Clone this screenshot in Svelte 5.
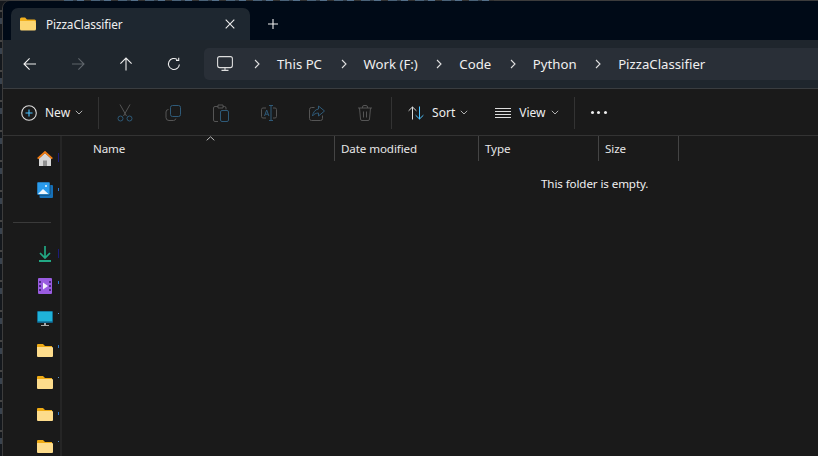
<script lang="ts">
	// Explorer window over a dark desktop, showing an empty folder.
	const crumbs = ['This PC', 'Work (F:)', 'Code', 'Python', 'PizzaClassifier'];
	const columns = [
		{ label: 'Name', cls: 'col-name' },
		{ label: 'Date modified', cls: 'col-date' },
		{ label: 'Type', cls: 'col-type' },
		{ label: 'Size', cls: 'col-size' }
	];
	// sidebar labels are cut off by the pane edge, only a sliver of each shows
	const sidebar = [
		{ icon: 'home', sliver: 'dim tall' },
		{ icon: 'gallery', sliver: 'short low' },
		{ icon: 'sep', sliver: '' },
		{ icon: 'download', sliver: 'dim tall' },
		{ icon: 'video', sliver: 'short' },
		{ icon: 'pc', sliver: 'dot' },
		{ icon: 'folder', sliver: 'short' },
		{ icon: 'folder', sliver: 'dot' },
		{ icon: 'folder', sliver: 'short low' },
		{ icon: 'folder', sliver: 'dot' }
	];
</script>

<div class="desk">
	<div class="window">
		<div class="titlebar">
			<div class="tab">
				<svg class="tab-folder" width="16" height="14" viewBox="0 0 16 14">
					<path d="M0 2a1.500 1.500 0 0 1 1.500-1.500h3.600L7 2.500h7.500A1.500 1.500 0 0 1 16 4v1H0z" fill="#f2b01e" />
					<path d="M0 4h14.500A1.500 1.500 0 0 1 16 5.500v6.500a1.500 1.500 0 0 1-1.500 1.500h-13A1.500 1.500 0 0 1 0 12z" fill="#fcd672" />
				</svg>
				<span class="tab-title">PizzaClassifier</span>
				<svg class="tab-close" width="10" height="10" viewBox="0 0 10 10">
					<path d="M.7.7l8.600 8.600M9.300.7L.7 9.300" stroke="#eee" stroke-width="1.100" fill="none" />
				</svg>
			</div>
			<svg class="tab-add" width="10" height="10" viewBox="0 0 10 10">
				<path d="M5 0v10M0 5h10" stroke="#eee" stroke-width="1.100" fill="none" />
			</svg>
		</div>

		<div class="navbar">
			<div class="nav-buttons">
				<svg width="14" height="14" viewBox="0 0 14 14"><path d="M13 7H1.200M6.600 1.400L1 7l5.600 5.600" stroke="#eee" stroke-width="1.100" fill="none" /></svg>
				<svg width="14" height="14" viewBox="0 0 14 14"><path d="M1 7h11.800M7.400 1.400L13 7l-5.600 5.600" stroke="#5f656b" stroke-width="1.100" fill="none" /></svg>
				<svg width="14" height="14" viewBox="0 0 14 14"><path d="M7 13.500V1.200M1.400 6.600L7 1l5.600 5.600" stroke="#eee" stroke-width="1.100" fill="none" /></svg>
				<svg width="14" height="14" viewBox="0 0 14 14"><path d="M12.400 7.500A5.500 5.500 0 1 1 10.300 2.600M11.700.8v2.700H9" stroke="#eee" stroke-width="1.100" fill="none" /></svg>
			</div>
			<div class="address">
				<svg class="pc-icon" width="16" height="16" viewBox="0 0 16 16">
					<rect x=".6" y=".6" width="14.800" height="11" rx="2" stroke="#ddd" stroke-width="1.100" fill="none" />
					<path d="M8 11.600v2.800M4.500 14.400h7" stroke="#ddd" stroke-width="1.100" fill="none" />
				</svg>
				{#each crumbs as crumb}
					<svg class="crumb-sep" width="6" height="10" viewBox="0 0 6 10"><path d="M1 1l4 4-4 4" stroke="#ddd" stroke-width="1.100" fill="none" /></svg>
					<span class="crumb">{crumb}</span>
				{/each}
			</div>
		</div>

		<div class="toolbar">
			<button class="tool new" type="button">
				<svg width="16" height="16" viewBox="0 0 16 16">
					<circle cx="8" cy="8" r="7.300" stroke="#ddd" stroke-width="1.100" fill="none" />
					<path d="M8 4.500v7M4.500 8h7" stroke="#4cc2ff" stroke-width="1.100" fill="none" />
				</svg>
				<span>New</span>
				<svg class="caret" width="8" height="5" viewBox="0 0 8 5"><path d="M.8.8L4 4l3.200-3.200" stroke="#b0b0b0" fill="none" /></svg>
			</button>
			<div class="vsep first"></div>
			<div class="disabled-tools">
				<span class="slot">
					<svg width="16" height="18" viewBox="0 0 16 18">
						<path d="M3 .5l6.500 11.500M13 .5L6.500 12" stroke="#555" fill="none" />
						<circle cx="3.500" cy="14.500" r="2.500" stroke="#2f5a78" fill="none" />
						<circle cx="12.500" cy="14.500" r="2.500" stroke="#2f5a78" fill="none" />
					</svg>
				</span>
				<span class="slot">
					<svg width="16" height="16" viewBox="0 0 16 16">
						<rect x="5.500" y=".5" width="10" height="11" rx="2" stroke="#2f5a78" fill="none" />
						<path d="M3.500 4.500A2.500 2.500 0 0 0 1 7v5.500a3 3 0 0 0 3 3h4.500a2.500 2.500 0 0 0 2.400-2" stroke="#555" fill="none" />
					</svg>
				</span>
				<span class="slot">
					<svg width="16" height="18" viewBox="0 0 16 18">
						<path d="M5 2.500H2a1.500 1.500 0 0 0-1.500 1.500v12A1.500 1.500 0 0 0 2 17.500h3M5 1h5v3H5zM10 2.500h1.500A1.500 1.500 0 0 1 13 4v1.500" stroke="#555" fill="none" />
						<rect x="7.500" y="6.500" width="8" height="11" rx="1.500" stroke="#2f5a78" fill="none" />
					</svg>
				</span>
				<span class="slot">
					<svg width="16" height="16" viewBox="0 0 16 16">
						<path d="M5 3H2a1.500 1.500 0 0 0-1.500 1.500v7A1.500 1.500 0 0 0 2 13h3M12 3h2a1.500 1.500 0 0 1 1.500 1.500v7A1.500 1.500 0 0 1 14 13h-2" stroke="#555" fill="none" />
						<path d="M8 .5h4M8 15.500h4M10 .5v15M3.500 11L5.700 5l2.200 6M4.300 9.200h2.800" stroke="#2f5a78" fill="none" />
					</svg>
				</span>
				<span class="slot">
					<svg width="16" height="16" viewBox="0 0 16 16">
						<path d="M5.500 2.500H2.500A2 2 0 0 0 .5 4.500v9a2 2 0 0 0 2 2h9a2 2 0 0 0 2-2v-3" stroke="#555" fill="none" />
						<path d="M9.500 1l6 5-6 5V8C7 8 5 9 3.500 11 4 7.500 6 4.500 9.500 4z" stroke="#2f5a78" fill="none" />
					</svg>
				</span>
				<span class="slot">
					<svg width="14" height="16" viewBox="0 0 14 16">
						<path d="M0 3h14M4.500 3V2A1.500 1.500 0 0 1 6 .5h2A1.500 1.500 0 0 1 9.500 2v1M1.500 3l1 11a1.500 1.500 0 0 0 1.500 1.500h6a1.500 1.500 0 0 0 1.500-1.500l1-11M5.500 6.500v6M8.500 6.500v6" stroke="#555" fill="none" />
					</svg>
				</span>
			</div>
			<div class="vsep"></div>
			<button class="tool sort" type="button">
				<svg width="16" height="14" viewBox="0 0 16 14">
					<path d="M4.500 13.500V1M.6 4.800L4.500 1l3.900 3.800" stroke="#ddd" fill="none" />
					<path d="M11.500.5V13M7.600 9.200l3.900 3.800 3.900-3.800" stroke="#4cc2ff" fill="none" />
				</svg>
				<span>Sort</span>
				<svg class="caret" width="8" height="5" viewBox="0 0 8 5"><path d="M.8.8L4 4l3.200-3.200" stroke="#b0b0b0" fill="none" /></svg>
			</button>
			<button class="tool view" type="button">
				<svg width="16" height="10" viewBox="0 0 16 10">
					<path d="M0 .5h16M0 3.500h16M0 6.500h16M0 9.500h16" stroke="#ddd" fill="none" />
				</svg>
				<span>View</span>
				<svg class="caret" width="8" height="5" viewBox="0 0 8 5"><path d="M.8.8L4 4l3.200-3.200" stroke="#b0b0b0" fill="none" /></svg>
			</button>
			<div class="vsep"></div>
			<div class="more"><i></i><i></i><i></i></div>
		</div>

		<div class="body">
			<nav class="sidebar">
				{#each sidebar as row}
					{#if row.icon === 'sep'}
						<div class="side-sep"></div>
					{:else}
						<div class="side-row">
							<span class="side-icon">
								{#if row.icon === 'home'}
									<svg width="16" height="15" viewBox="0 0 16 15">
										<path d="M2 7.500L8 2l6 5.500V15H2z" fill="#d6d6d6" />
										<rect x="6" y="9.500" width="4" height="5.500" fill="#8f8f8f" />
										<path d="M.7 7.700L8 1l7.300 6.700" stroke="#ef7a12" stroke-width="1.800" fill="none" />
									</svg>
								{:else if row.icon === 'gallery'}
									<svg width="16" height="16" viewBox="0 0 16 16">
										<rect x="2.500" y="3" width="13.500" height="13" rx="1" fill="#1570b8" />
										<rect width="13" height="13" rx="1" fill="#2a9bec" stroke="#1a1a1a" stroke-width=".5" />
										<path d="M1 12l5-5 5.500 5z" fill="#eef7fd" />
										<circle cx="9" cy="4" r="1" fill="#eef7fd" />
									</svg>
								{:else if row.icon === 'download'}
									<svg width="14" height="16" viewBox="0 0 14 16">
										<path d="M7 0v11M2 7l5 5 5-5" stroke="#22a884" stroke-width="1.700" fill="none" />
										<path d="M1 15h12" stroke="#22a884" stroke-width="2" />
									</svg>
								{:else if row.icon === 'video'}
									<svg width="14" height="16" viewBox="0 0 14 16">
										<rect width="14" height="16" rx="1" fill="#9a5ce0" />
										<path d="M5 4.500v7l5-3.500z" fill="#f4f0fb" />
										<path d="M1 3h2v2H1zM1 7h2v2H1zM1 11h2v2H1zM11 3h2v2h-2zM11 7h2v2h-2zM11 11h2v2h-2z" fill="#4a2a80" />
									</svg>
								{:else if row.icon === 'pc'}
									<svg width="16" height="15" viewBox="0 0 16 15">
										<rect width="16" height="12" rx="1" fill="#0f5f85" />
										<rect x=".8" y=".6" width="14.400" height="9.800" fill="#1fb2d8" />
										<path d="M7 12h2v2H7z" fill="#a8a8a8" />
										<path d="M4 14h8v1H4z" fill="#a8a8a8" />
									</svg>
								{:else}
									<svg width="16" height="13" viewBox="0 0 16 13">
										<path d="M0 1a1 1 0 0 1 1-1h5l2 2h7v3H0z" fill="#eeaa14" />
										<path d="M0 3h15a1 1 0 0 1 1 1v8a1 1 0 0 1-1 1H1a1 1 0 0 1-1-1z" fill="#fddc8c" />
									</svg>
								{/if}
							</span>
							<i class="sliver {row.sliver}"></i>
						</div>
					{/if}
				{/each}
			</nav>
			<div class="pane-line"></div>
			<main class="list">
				<div class="columns">
					<svg class="sort-mark" width="9" height="5" viewBox="0 0 9 5"><path d="M.7 4.300L4.500.8l3.800 3.500" stroke="#bbb" fill="none" /></svg>
					{#each columns as col}
						<div class="col {col.cls}">{col.label}</div>
					{/each}
				</div>
				<div class="empty">This folder is empty.</div>
			</main>
		</div>
	</div>
</div>

<style>
	:global(body) {
		margin: 0;
		background: #15171a;
		overflow: hidden;
	}
	.desk {
		width: 818px;
		height: 456px;
		padding: 1px 0 0 3px;
		box-sizing: border-box;
		/* bits of the window behind: text tops along y=0, text ends down the left edge */
		background:
			repeating-linear-gradient(90deg, #4a6278 0 9px, #36404a 9px 13px, #55708a 13px 20px, #333 20px 27px) 64px 0 / 430px 1px no-repeat,
			linear-gradient(#3c3c3c, #3c3c3c) 0 0 / 100% 1px no-repeat,
			repeating-linear-gradient(#14181d 0 10px, #444 10px 12px, #14181d 12px 18px, #3a434e 18px 24px, #14181d 24px 30px) 0 0 / 2px 100% no-repeat,
			#14181d;
		font-family: "Noto Sans", "Open Sans", sans-serif;
	}
	.window {
		height: 455px;
		display: flex;
		flex-direction: column;
		background: #1a1a1a;
		border-radius: 7px 0 0 0;
		overflow: hidden;
		box-shadow: -1px 0 0 #3c3c3c;
		color: #f0f0f0;
	}
	.titlebar {
		height: 39px;
		flex: none;
		display: flex;
		align-items: flex-end;
		padding-left: 8px;
		background: #000a17;
	}
	.tab {
		width: 239px;
		height: 32px;
		box-sizing: border-box;
		padding: 0 15px 0 9px;
		display: flex;
		align-items: center;
		border-radius: 7px 7px 0 0;
		background: #1e2730;
	}
	.tab-folder {
		margin-right: 10px;
	}
	.tab-title {
		flex: 1;
		font-size: 11.8px;
		letter-spacing: -0.1px;
	}
	.tab-add {
		margin: 0 0 11px 18px;
	}
	.navbar {
		height: 48px;
		flex: none;
		display: flex;
		align-items: center;
		background: #1f262d;
		border-bottom: 1px solid #3a3d40;
	}
	.nav-buttons {
		width: 201px;
		padding-left: 20px;
		box-sizing: border-box;
		display: flex;
		gap: 34px;
	}
	.address {
		flex: 1;
		height: 32px;
		display: flex;
		align-items: center;
		padding-left: 13px;
		background: #292f37;
		border-radius: 5px 0 0 5px;
		font-size: 13.2px;
	}
	.pc-icon {
		margin-right: 21px;
	}
	.crumb-sep {
		margin-right: 17px;
	}
	.crumb {
		margin-right: 18.6px;
		white-space: nowrap;
	}
	.toolbar {
		height: 45px;
		padding-top: 1px;
		flex: none;
		display: flex;
		align-items: center;
		background: #1a1a1a;
		border-bottom: 1px solid #333;
		font-size: 12px;
	}
	.tool {
		display: flex;
		align-items: center;
		padding: 0;
		border: 0;
		background: none;
		color: #eee;
		font: inherit;
	}
	.tool span {
		margin: 0 5px 0 8px;
	}
	.new {
		margin-left: 18px;
	}
	.vsep {
		width: 1px;
		height: 32px;
		background: #333;
	}
	.vsep.first {
		margin-left: 15px;
	}
	.disabled-tools {
		width: 292px;
		padding-left: 2px;
		box-sizing: border-box;
		display: flex;
		align-items: center;
	}
	.slot {
		width: 48px;
		display: flex;
		justify-content: center;
	}
	.sort {
		margin-left: 16px;
	}
	.view {
		margin-left: 27px;
		margin-right: 15px;
	}
	.more {
		margin-left: 16px;
		display: flex;
		gap: 3.5px;
	}
	.more i {
		width: 3px;
		height: 3px;
		border-radius: 50%;
		background: #eee;
	}
	.body {
		flex: 1;
		min-height: 0;
		display: flex;
	}
	.sidebar {
		width: 57px;
		flex: none;
		padding-top: 6px;
		overflow: hidden;
	}
	.side-row {
		height: 32px;
		position: relative;
		display: flex;
		align-items: center;
	}
	.side-icon {
		width: 16px;
		margin-left: 34px;
		display: flex;
		justify-content: center;
	}
	.sliver {
		position: absolute;
		left: 55px;
		top: 11px;
		width: 1px;
		height: 3px;
		background: #2b74c8;
	}
	.sliver.dim {
		background: #1c1c78;
	}
	.sliver.tall {
		height: 9px;
	}
	.sliver.low {
		top: 14px;
	}
	.sliver.dot {
		height: 1px;
		background: #5b93cf;
	}
	.side-sep {
		height: 1px;
		width: 38px;
		margin: 16px 0 15px 10px;
		background: #3a3a3a;
	}
	.pane-line {
		width: 2px;
		flex: none;
		background: #252525;
	}
	.list {
		flex: 1;
		position: relative;
	}
	.columns {
		height: 25px;
		display: flex;
		font-size: 11.6px;
		letter-spacing: -0.1px;
		color: #e6e6e6;
	}
	.col {
		box-sizing: border-box;
		padding: 5px 0 0 6px;
		height: 25px;
		border-right: 1px solid #444;
	}
	.col-name {
		width: 273px;
		padding-left: 31px;
	}
	.col-date {
		width: 144px;
	}
	.col-type {
		width: 120px;
	}
	.col-size {
		width: 80px;
	}
	.sort-mark {
		position: absolute;
		left: 144px;
		top: 0;
	}
	.empty {
		margin-top: 15px;
		padding-left: 479px;
		font-size: 11.6px;
		letter-spacing: -0.1px;
		color: #f0f0f0;
	}
</style>
